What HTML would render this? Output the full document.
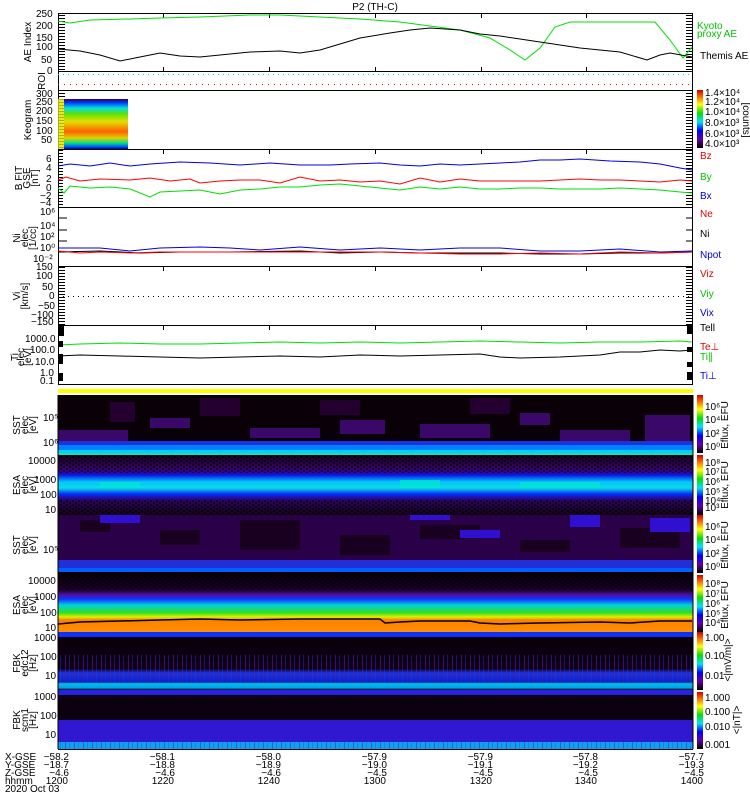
<!DOCTYPE html>
<html><head><meta charset="utf-8"><style>
body{margin:0;background:#fff}
svg text{font-family:"Liberation Sans",sans-serif;font-size:10px}
</style></head><body>
<svg width="750" height="800" viewBox="0 0 750 800" xmlns="http://www.w3.org/2000/svg">
<defs>
<linearGradient id="cb" x1="0" y1="0" x2="0" y2="1">
<stop offset="0" stop-color="#d00000"/><stop offset="0.12" stop-color="#ff7000"/><stop offset="0.25" stop-color="#ffff00"/><stop offset="0.4" stop-color="#00e000"/><stop offset="0.55" stop-color="#00e0ff"/><stop offset="0.7" stop-color="#0000ff"/><stop offset="0.85" stop-color="#6000a0"/><stop offset="1" stop-color="#000000"/>
</linearGradient>
<linearGradient id="keo" x1="0" y1="0" x2="0" y2="1">
<stop offset="0" stop-color="#300060"/><stop offset="0.08" stop-color="#0040ff"/><stop offset="0.18" stop-color="#00e0e0"/><stop offset="0.3" stop-color="#60e000"/><stop offset="0.45" stop-color="#e0e000"/><stop offset="0.65" stop-color="#ff6000"/><stop offset="0.78" stop-color="#e0d000"/><stop offset="0.88" stop-color="#00e080"/><stop offset="0.95" stop-color="#0060ff"/><stop offset="1" stop-color="#0000a0"/>
</linearGradient>
<linearGradient id="esa1" x1="0" y1="0" x2="0" y2="1">
<stop offset="0" stop-color="#180020"/><stop offset="0.25" stop-color="#3a0070"/><stop offset="0.33" stop-color="#1010e0"/><stop offset="0.45" stop-color="#00c8ff"/><stop offset="0.55" stop-color="#10d8e0"/><stop offset="0.65" stop-color="#0030ff"/><stop offset="0.75" stop-color="#30006a"/><stop offset="1" stop-color="#140018"/>
</linearGradient>
<linearGradient id="esa2" x1="0" y1="0" x2="0" y2="1">
<stop offset="0" stop-color="#080008"/><stop offset="0.3" stop-color="#180028"/><stop offset="0.38" stop-color="#5010a0"/><stop offset="0.45" stop-color="#1030ff"/><stop offset="0.55" stop-color="#00d0e0"/><stop offset="0.68" stop-color="#30e020"/><stop offset="0.75" stop-color="#e0f000"/><stop offset="0.8" stop-color="#ff8000"/><stop offset="1" stop-color="#ff9000"/>
</linearGradient>
<linearGradient id="fbk1" x1="0" y1="0" x2="0" y2="1">
<stop offset="0" stop-color="#080008"/><stop offset="0.6" stop-color="#100018"/><stop offset="0.68" stop-color="#2030e0"/><stop offset="0.85" stop-color="#1020c0"/><stop offset="0.88" stop-color="#00c0e0"/><stop offset="0.96" stop-color="#00a0f0"/><stop offset="1" stop-color="#000000"/>
</linearGradient>
<pattern id="vl" width="9" height="10" patternUnits="userSpaceOnUse"><rect x="2" width="1" height="10" fill="#5020a0"/><rect x="6" width="1" height="10" fill="#2040ff" opacity=".6"/></pattern>
<pattern id="spk" width="6" height="4" patternUnits="userSpaceOnUse"><rect width="2" height="2" fill="#000"/><rect x="3" y="2" width="2" height="2" fill="#000"/></pattern>
<pattern id="tk" width="6" height="3" patternUnits="userSpaceOnUse"><rect width="6" height="1" fill="#000"/></pattern>
</defs>

<text x="375" y="10" text-anchor="middle">P2 (TH-C)</text>

<!-- Panel frames -->
<g fill="none" stroke="#000" stroke-width="1">
<rect x="58.5" y="13.5" width="634" height="58"/>
<rect x="58.5" y="71.5" width="634" height="19"/>
<rect x="58.5" y="90.5" width="634" height="59"/>
<rect x="58.5" y="149.5" width="634" height="58"/>
<rect x="58.5" y="207.5" width="634" height="59"/>
<rect x="58.5" y="266.5" width="634" height="59"/>
<rect x="58.5" y="325.5" width="634" height="59"/>
</g>
<!-- minor ticks -->
<rect x="59" y="14" width="6" height="57" fill="url(#tk)"/><rect x="686" y="14" width="6" height="57" fill="url(#tk)"/>
<rect x="59" y="91" width="6" height="58" fill="url(#tk)"/><rect x="686" y="91" width="6" height="58" fill="url(#tk)"/>
<rect x="59" y="150" width="4" height="57" fill="url(#tk)"/><rect x="686" y="150" width="6" height="57" fill="url(#tk)"/>
<rect x="59" y="267" width="6" height="58" fill="url(#tk)"/><rect x="686" y="267" width="6" height="58" fill="url(#tk)"/>
<g stroke="#000">
<path d="M163.5 14v4M269.5 14v4M375.5 14v4M481.5 14v4M586.5 14v4M163.5 71v-4M269.5 71v-4M375.5 71v-4M481.5 71v-4M586.5 71v-4"/>
<path d="M163.5 150v4M269.5 150v4M375.5 150v4M481.5 150v4M586.5 150v4M163.5 267v4M269.5 267v4M375.5 267v4M481.5 267v4M586.5 267v4M163.5 326v4M269.5 326v4M375.5 326v4M481.5 326v4M586.5 326v4"/>
<path d="M59 218h8M59 230h8M59 241h8M59 252h8M686 218h6M686 230h6M686 241h6M686 252h6"/>
</g>

<!-- AE -->
<polyline fill="none" stroke="#00e000" points="58,21 70,23 90,20 130,19 160,18 200,17 250,15 280,15 320,17 360,19 400,22 430,26 460,30 490,38 510,50 525,60 540,48 555,27 570,22 600,22 655,22 670,40 683,58 692,47"/>
<polyline fill="none" stroke="#000" points="58,49 80,51 100,55 120,61 140,57 160,53 180,56 200,57 220,55 250,52 280,51 300,53 320,50 340,44 360,38 390,33 410,30 430,28 460,30 480,34 500,36 520,39 540,42 560,45 580,48 600,50 620,52 647,60 660,55 670,53 692,57"/>
<text transform="translate(31,42) rotate(-90)" text-anchor="middle" font-size="9">AE Index</text>
<text x="36" y="17">250</text><text x="36" y="29">200</text><text x="36" y="41">150</text><text x="36" y="50">100</text><text x="41" y="63">50</text><text x="47" y="74">0</text>
<text x="697" y="29" fill="#00c000" font-size="9">Kyoto</text><text x="697" y="37" fill="#00c000" font-size="9">proxy AE</text>
<text x="700" y="59" font-size="9">Themis AE</text>

<!-- ROI -->
<line x1="58" y1="74.5" x2="692" y2="74.5" stroke="#00d0ff" stroke-dasharray="1,4"/>
<line x1="58" y1="84.5" x2="692" y2="84.5" stroke="#ff0000" stroke-dasharray="1,5"/>
<text transform="translate(45,81) rotate(-90)" text-anchor="middle" font-size="9">ROI</text>

<!-- Keogram -->
<rect x="64" y="99" width="64" height="50" fill="url(#keo)"/>
<rect x="58" y="99" width="6" height="50" fill="#e0e000" opacity=".8"/>
<text transform="translate(31,120) rotate(-90)" text-anchor="middle" font-size="9">Keogram</text>
<text x="36" y="97">300</text><text x="36" y="105">250</text><text x="36" y="114">200</text><text x="36" y="124">150</text><text x="36" y="134">100</text><text x="41" y="143">50</text>
<rect x="697" y="90" width="6" height="58" fill="url(#cb)"/>
<g font-size="8"><text x="705" y="96">1.4×10⁴</text><text x="705" y="105">1.2×10⁴</text><text x="705" y="115">1.0×10⁴</text><text x="705" y="126">8.0×10³</text><text x="705" y="137">6.0×10³</text><text x="705" y="147">4.0×10³</text></g>
<text transform="translate(743,120) rotate(90)" text-anchor="middle" font-size="8">[counts]</text>

<!-- B FIT -->
<polyline fill="none" stroke="#0000e0" points="58,166 70,164 90,166 110,163 130,166 150,164 180,162 210,163 240,165 270,163 300,165 330,165 350,164 380,163 400,165 420,166 440,164 460,165 480,164 500,163 520,162 540,160 560,160 580,159 610,161 640,162 660,164 680,168 692,170"/>
<polyline fill="none" stroke="#ff0000" points="58,180 66,177 80,181 100,179 130,180 150,178 170,181 190,179 200,183 220,181 240,180 260,180 280,183 300,177 320,181 340,180 360,182 380,181 400,184 420,178 440,182 460,179 480,181 500,181 520,181 540,181 560,180 580,179 600,180 620,180 640,181 660,182 680,180 692,181"/>
<polyline fill="none" stroke="#00e000" points="58,188 64,193 70,186 90,188 110,187 130,189 150,197 160,192 180,191 200,190 220,194 240,190 260,189 280,187 300,187 320,185 340,184 360,186 380,188 400,190 420,187 440,189 460,187 480,189 500,189 520,188 540,188 560,189 580,189 600,189 620,188 640,189 660,190 680,192 692,193"/>
<text x="46" y="162">6</text><text x="46" y="171">4</text><text x="46" y="182">2</text><text x="46" y="191">0</text><text x="40" y="199">−2</text><text x="40" y="206">−4</text>
<text transform="translate(22,178) rotate(-90)" text-anchor="middle" font-size="8">B FIT</text>
<text transform="translate(30,178) rotate(-90)" text-anchor="middle" font-size="7">GSE</text>
<text transform="translate(38,178) rotate(-90)" text-anchor="middle" font-size="8">[nT]</text>
<text x="700" y="159" fill="#e00000" font-size="9">Bz</text><text x="700" y="180" fill="#00c000" font-size="9">By</text><text x="700" y="199" fill="#0000e0" font-size="9">Bx</text>

<!-- Ni -->
<polyline fill="none" stroke="#0000e0" points="58,248 100,248 130,251 160,248 200,247 230,248 260,250 300,247 340,250 380,248 420,250 460,248 500,248 540,251 580,251 620,249 660,252 692,251"/>
<polyline fill="none" stroke="#000" points="58,252 100,251 140,253 180,252 230,252 300,251 340,253 380,252 420,253 460,253 500,253 540,254 580,254 620,253 660,253 692,252"/>
<polyline fill="none" stroke="#ff0000" points="58,251 80,253 100,252 130,253 160,252 230,252 300,252 340,252 380,252 420,253 460,254 500,254 540,253 580,254 620,252 660,253 692,252"/>
<g font-size="9"><text x="40" y="215">10⁶</text><text x="40" y="229">10⁴</text><text x="40" y="240">10²</text><text x="40" y="251">10⁰</text><text x="33" y="262">10⁻²</text></g>
<text transform="translate(20,238) rotate(-90)" text-anchor="middle" font-size="8">Ni</text>
<text transform="translate(28,238) rotate(-90)" text-anchor="middle" font-size="7">elec</text>
<text transform="translate(36,238) rotate(-90)" text-anchor="middle" font-size="8">[1/cc]</text>
<text x="700" y="217" fill="#e00000" font-size="9">Ne</text><text x="700" y="237" font-size="9">Ni</text><text x="700" y="258" fill="#0000e0" font-size="9">Npot</text>

<!-- Vi -->
<line x1="58" y1="296.5" x2="692" y2="296.5" stroke="#000" stroke-dasharray="1,4"/>
<g font-size="9"><text x="36" y="270">150</text><text x="36" y="279">100</text><text x="42" y="290">50</text><text x="49" y="299">0</text><text x="38" y="309">−50</text><text x="31" y="318">−100</text><text x="31" y="325">−150</text></g>
<text transform="translate(20,296) rotate(-90)" text-anchor="middle" font-size="8">Vi</text>
<text transform="translate(28,296) rotate(-90)" text-anchor="middle" font-size="8">[km/s]</text>
<text x="700" y="277" fill="#e00000" font-size="9">Viz</text><text x="700" y="297" fill="#00c000" font-size="9">Viy</text><text x="700" y="316" fill="#0000e0" font-size="9">Vix</text>
<text x="700" y="331" font-size="9">Tell</text>

<!-- Ti -->
<polyline fill="none" stroke="#00e000" points="58,345 80,344 120,343 160,344 200,344 240,343 280,342 320,343 360,342 400,343 440,342 480,341 520,342 560,343 600,342 640,342 680,341 692,342"/>
<polyline fill="none" stroke="#000" points="58,356 80,355 120,356 160,357 200,358 240,357 280,356 320,357 360,355 400,356 440,355 480,354 500,357 520,358 560,357 600,355 620,352 640,352 660,350 680,351 692,350"/>
<rect x="58" y="326" width="6" height="10"/><rect x="58" y="341" width="5" height="6"/><rect x="58" y="354" width="5" height="10"/><rect x="58" y="373" width="5" height="8"/>
<rect x="687" y="326" width="6" height="8"/><rect x="687" y="347" width="6" height="5"/><rect x="687" y="362" width="6" height="5"/><rect x="687" y="372" width="6" height="8"/>
<g font-size="9"><text x="25" y="342">1000.0</text><text x="30" y="353">100.0</text><text x="35" y="365">10.0</text><text x="40" y="376">1.0</text><text x="40" y="384">0.1</text></g>
<text transform="translate(18,357) rotate(-90)" text-anchor="middle" font-size="8">Ti</text>
<text transform="translate(24,357) rotate(-90)" text-anchor="middle" font-size="7">elec</text>
<text transform="translate(31,357) rotate(-90)" text-anchor="middle" font-size="7">[eV]</text>
<text x="700" y="350" fill="#e00000" font-size="9">Te⊥</text><text x="700" y="360" fill="#00c000" font-size="9">Ti∥</text><text x="700" y="379" fill="#0000e0" font-size="9">Ti⊥</text>

<!-- yellow bar -->
<rect x="58" y="389" width="635" height="4" fill="#ffff00"/>

<!-- SST1 -->
<rect x="58" y="395" width="635" height="60" fill="#0a0008"/>
<g fill="#3a0868">
<rect x="58" y="430" width="70" height="12"/><rect x="150" y="418" width="40" height="10"/><rect x="250" y="428" width="70" height="10"/><rect x="340" y="420" width="45" height="14"/><rect x="420" y="424" width="70" height="14"/><rect x="520" y="413" width="30" height="12"/><rect x="560" y="430" width="70" height="12"/><rect x="645" y="415" width="45" height="26"/>
</g>
<g fill="#240030"><rect x="110" y="402" width="25" height="20"/><rect x="200" y="398" width="40" height="18"/><rect x="320" y="400" width="40" height="15"/><rect x="470" y="398" width="40" height="16"/></g>
<rect x="58" y="441" width="635" height="4" fill="#2030e0"/>
<rect x="58" y="445" width="635" height="5" fill="#0080ff"/>
<rect x="58" y="450" width="635" height="3" fill="#00d0ff"/>
<rect x="58" y="453" width="635" height="2" fill="#20e0a0"/>
<text transform="translate(20,425) rotate(-90)" text-anchor="middle" font-size="8">SST</text>
<text transform="translate(28,425) rotate(-90)" text-anchor="middle" font-size="7">elec</text>
<text transform="translate(36,425) rotate(-90)" text-anchor="middle" font-size="8">[eV]</text>
<text x="43" y="421" font-size="9">10⁵</text><text x="43" y="446" font-size="9">10⁶</text>
<rect x="697" y="395" width="6" height="58" fill="url(#cb)"/>
<g font-size="8"><text x="705" y="410">10⁶</text><text x="705" y="423">10⁴</text><text x="705" y="437">10²</text><text x="705" y="450">10⁰</text></g>
<text transform="translate(728,425) rotate(-90)" text-anchor="middle" font-size="8">Eflux, EFU</text>

<!-- ESA1 -->
<rect x="58" y="455" width="635" height="60" fill="url(#esa1)"/>
<rect x="58" y="455" width="635" height="18" fill="url(#spk)" opacity=".7"/>
<rect x="58" y="500" width="635" height="15" fill="url(#spk)" opacity=".8"/>
<g fill="#00e8d0" opacity=".7"><rect x="100" y="482" width="40" height="6"/><rect x="400" y="480" width="40" height="8"/><rect x="520" y="482" width="80" height="6"/></g>
<text transform="translate(20,485) rotate(-90)" text-anchor="middle" font-size="8">ESA</text>
<text transform="translate(28,485) rotate(-90)" text-anchor="middle" font-size="7">elec</text>
<text transform="translate(36,485) rotate(-90)" text-anchor="middle" font-size="8">[eV]</text>
<g font-size="9"><text x="28" y="464">10000</text><text x="34" y="483">1000</text><text x="40" y="498">100</text><text x="45" y="513">10</text></g>
<rect x="697" y="455" width="6" height="60" fill="url(#cb)"/>
<g font-size="8"><text x="705" y="466">10⁸</text><text x="705" y="475">10⁷</text><text x="705" y="485">10⁶</text><text x="705" y="495">10⁵</text><text x="705" y="504">10⁴</text><text x="705" y="511">10³</text></g>
<text transform="translate(728,485) rotate(-90)" text-anchor="middle" font-size="8">Eflux, EFU</text>

<!-- SST2 -->
<rect x="58" y="515" width="635" height="57" fill="#2a0048"/>
<g fill="#1a0020"><rect x="80" y="520" width="30" height="12"/><rect x="160" y="530" width="40" height="15"/><rect x="240" y="520" width="60" height="30"/><rect x="340" y="535" width="50" height="20"/><rect x="420" y="525" width="60" height="14"/><rect x="520" y="540" width="50" height="12"/><rect x="620" y="528" width="60" height="20"/></g>
<g fill="#3010d0"><rect x="100" y="515" width="40" height="8"/><rect x="410" y="515" width="40" height="5"/><rect x="460" y="530" width="40" height="8"/><rect x="570" y="515" width="30" height="12"/><rect x="650" y="518" width="40" height="14"/></g>
<rect x="58" y="560" width="635" height="8" fill="#2038f0" opacity=".85"/>
<rect x="58" y="568" width="635" height="4" fill="#0060ff"/>
<text transform="translate(20,545) rotate(-90)" text-anchor="middle" font-size="8">SST</text>
<text transform="translate(28,545) rotate(-90)" text-anchor="middle" font-size="7">elec</text>
<text transform="translate(36,545) rotate(-90)" text-anchor="middle" font-size="8">[eV]</text>
<text x="43" y="553" font-size="9">10⁵</text>
<rect x="697" y="515" width="6" height="58" fill="url(#cb)"/>
<g font-size="8"><text x="705" y="530">10⁶</text><text x="705" y="543">10⁴</text><text x="705" y="557">10²</text><text x="705" y="570">10⁰</text></g>
<text transform="translate(728,545) rotate(-90)" text-anchor="middle" font-size="8">Eflux, EFU</text>

<!-- ESA2 -->
<rect x="58" y="572" width="635" height="60" fill="url(#esa2)"/>
<rect x="58" y="572" width="635" height="18" fill="url(#spk)" opacity=".5"/>
<polyline fill="none" stroke="#000" stroke-width="1.5" points="58,624 80,622 120,621 160,620 200,619 240,620 300,619 380,619 385,623 400,622 420,621 470,621 480,623 500,624 540,623 600,622 630,623 660,621 692,621"/>
<rect x="58" y="632" width="635" height="5" fill="#1030ff"/>
<text transform="translate(20,605) rotate(-90)" text-anchor="middle" font-size="8">ESA</text>
<text transform="translate(28,605) rotate(-90)" text-anchor="middle" font-size="7">elec</text>
<text transform="translate(36,605) rotate(-90)" text-anchor="middle" font-size="8">[eV]</text>
<g font-size="9"><text x="28" y="584">10000</text><text x="34" y="600">1000</text><text x="40" y="616">100</text><text x="45" y="631">10</text></g>
<rect x="697" y="575" width="6" height="57" fill="url(#cb)"/>
<g font-size="8"><text x="705" y="587">10⁸</text><text x="705" y="597">10⁷</text><text x="705" y="607">10⁶</text><text x="705" y="617">10⁵</text><text x="705" y="626">10⁴</text></g>
<text transform="translate(728,605) rotate(-90)" text-anchor="middle" font-size="8">Eflux, EFU</text>

<!-- FBK1 -->
<rect x="58" y="637" width="635" height="53" fill="url(#fbk1)"/>
<rect x="58" y="655" width="635" height="18" fill="url(#vl)" opacity=".6"/>
<rect x="58" y="673" width="635" height="10" fill="url(#vl)" opacity=".5"/>
<text transform="translate(20,663) rotate(-90)" text-anchor="middle" font-size="8">FBK</text>
<text transform="translate(28,663) rotate(-90)" text-anchor="middle" font-size="7">edc12</text>
<text transform="translate(36,663) rotate(-90)" text-anchor="middle" font-size="8">[Hz]</text>
<g font-size="9"><text x="34" y="641">1000</text><text x="40" y="660">100</text><text x="45" y="679">10</text></g>
<rect x="697" y="632" width="6" height="58" fill="url(#cb)"/>
<g font-size="8"><text x="705" y="641">1.00</text><text x="705" y="659">0.10</text><text x="705" y="679">0.01</text></g>
<text transform="translate(731,660) rotate(-90)" text-anchor="middle" font-size="8">&lt;|mV/m|&gt;</text>

<!-- FBK2 -->
<rect x="58" y="690" width="635" height="5" fill="#2a20e0"/>
<rect x="58" y="695" width="635" height="25" fill="#0c0010"/>
<rect x="58" y="720" width="635" height="22" fill="#3018d0"/>
<rect x="58" y="742" width="635" height="7" fill="#10a0f0"/>
<rect x="58" y="742" width="635" height="7" fill="url(#vl)" opacity=".5"/>
<text transform="translate(20,720) rotate(-90)" text-anchor="middle" font-size="8">FBK</text>
<text transform="translate(28,720) rotate(-90)" text-anchor="middle" font-size="7">scm1</text>
<text transform="translate(36,720) rotate(-90)" text-anchor="middle" font-size="8">[Hz]</text>
<g font-size="9"><text x="34" y="700">1000</text><text x="40" y="719">100</text><text x="45" y="738">10</text></g>
<rect x="697" y="692" width="6" height="57" fill="url(#cb)"/>
<g font-size="8"><text x="705" y="701">1.000</text><text x="705" y="715">0.100</text><text x="705" y="730">0.010</text><text x="705" y="748">0.001</text></g>
<text transform="translate(740,720) rotate(-90)" text-anchor="middle" font-size="8">&lt;|nT|&gt;</text>

<!-- spectro frame -->
<rect x="57.5" y="395" width="1" height="354" fill="#000"/>
<rect x="692.5" y="395" width="1" height="354" fill="#000"/>
<rect x="58" y="749" width="635" height="1" fill="#000"/>

<!-- bottom labels -->
<g font-size="9">
<text x="5" y="760">X-GSE</text><text x="5" y="768">Y-GSE</text><text x="5" y="776">Z-GSE</text><text x="5" y="784">hhmm</text><text x="5" y="792">2020 Oct 03</text>
<g text-anchor="end">
<text x="69" y="760">−58.2</text><text x="69" y="768">−18.7</text><text x="69" y="776">−4.6</text><text x="68" y="784">1200</text>
<text x="175" y="760">−58.1</text><text x="175" y="768">−18.8</text><text x="175" y="776">−4.6</text><text x="174" y="784">1220</text>
<text x="281" y="760">−58.0</text><text x="281" y="768">−18.9</text><text x="281" y="776">−4.6</text><text x="280" y="784">1240</text>
<text x="387" y="760">−57.9</text><text x="387" y="768">−19.0</text><text x="387" y="776">−4.5</text><text x="386" y="784">1300</text>
<text x="493" y="760">−57.9</text><text x="493" y="768">−19.1</text><text x="493" y="776">−4.5</text><text x="492" y="784">1320</text>
<text x="598" y="760">−57.8</text><text x="598" y="768">−19.2</text><text x="598" y="776">−4.5</text><text x="597" y="784">1340</text>
<text x="704" y="760">−57.7</text><text x="704" y="768">−19.3</text><text x="704" y="776">−4.5</text><text x="703" y="784">1400</text>
</g></g>
</svg>
</body></html>
